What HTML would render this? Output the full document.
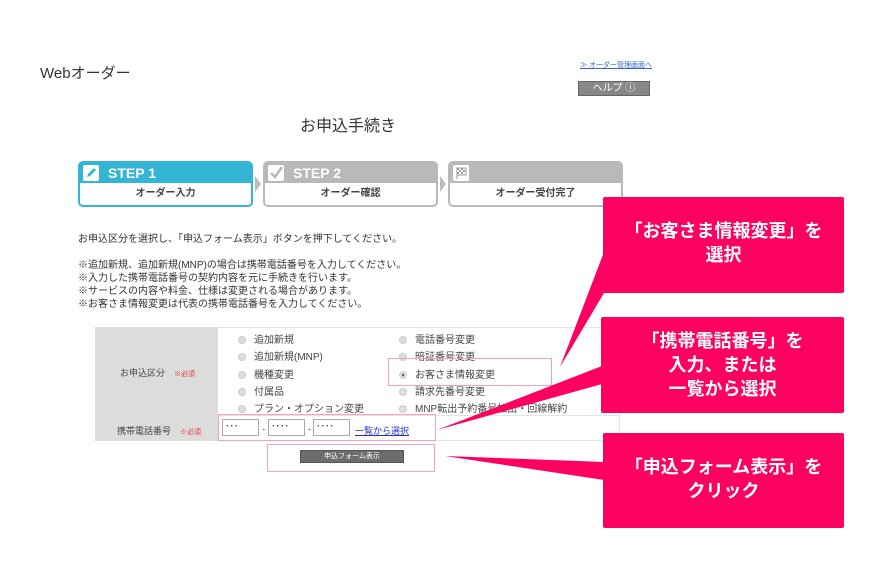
<!DOCTYPE html>
<html><head><meta charset="utf-8"><style>
*{margin:0;padding:0;box-sizing:border-box}
body{width:870px;height:566px;background:#fff;position:relative;overflow:hidden;font-family:"Liberation Sans","Noto Sans CJK JP",sans-serif;color:#333}
.a{position:absolute;white-space:nowrap}
.step{position:absolute;top:161px;height:46px;border:2px solid #b8b9bb;border-radius:5px;background:#b8b9bb}
.step .h{height:20px;color:#fff;font-weight:bold;font-size:14px;padding-left:28px;line-height:20px}
.step .b{position:absolute;left:0;right:0;bottom:0;height:22px;background:#fff;border-radius:0 0 3px 3px;text-align:center;font-size:10px;font-weight:bold;line-height:22px;color:#444}
.ic{position:absolute;left:3px;top:2px;width:16px;height:16px;background:#fff;border-radius:2px}
.r{position:absolute;font-size:10px;color:#444}
.r i{display:inline-block;width:8px;height:8px;border-radius:50%;background:#ddd;border:1px solid #ccc;margin-right:8px;vertical-align:-1px}
.pk{position:absolute;background:#fc0062;color:#fff;font-weight:bold;font-size:18px;text-align:center;line-height:24px;border-radius:2px}
.inp{position:absolute;top:419px;height:17px;border:1px solid #aaa;background:#fff;font-size:9px;padding-left:2px;line-height:12px}
</style></head><body>
<div class="a" style="left:40px;top:62px;font-size:15px;color:#333">Webオーダー</div>
<div class="a" style="left:580px;top:60px;font-size:7px;color:#36c;text-decoration:underline">≫ オーダー管理画面へ</div>
<div class="a" style="left:578px;top:81px;width:72px;height:15px;background:#888;border:1px solid #666;color:#fff;font-size:10px;text-align:center;line-height:13px">ヘルプ ⓘ</div>
<div class="a" style="left:300px;top:112px;font-size:16px;color:#333">お申込手続き</div>

<div class="step" style="left:78px;width:175px;background:#35b5d6;border-color:#35b5d6"><div class="ic"><svg width="16" height="16"><path d="M4 12 L5 9 L11 3 L13 5 L7 11 Z" fill="#35b5d6"/></svg></div><div class="h">STEP 1</div><div class="b">オーダー入力</div></div>
<div class="a" style="left:255px;top:176px;width:0;height:0;border-left:6px solid #bbb;border-top:8px solid transparent;border-bottom:8px solid transparent"></div>
<div class="step" style="left:263px;width:175px"><div class="ic"><svg width="16" height="16"><path d="M3 8 L7 12 L14 2" stroke="#b8b9bb" stroke-width="2.5" fill="none"/></svg></div><div class="h">STEP 2</div><div class="b">オーダー確認</div></div>
<div class="a" style="left:440px;top:176px;width:0;height:0;border-left:6px solid #bbb;border-top:8px solid transparent;border-bottom:8px solid transparent"></div>
<div class="step" style="left:448px;width:175px"><div class="ic"><svg width="16" height="16"><rect x="4" y="3" width="9" height="7" fill="none" stroke="#999"/><path d="M4 3h2v2H4zM8 3h2v2H8zM6 5h2v2H6zM10 5h2v2h-2zM4 7h2v2H4zM8 7h2v2H8z" fill="#999"/><path d="M4 3v11" stroke="#999"/></svg></div><div class="h"></div><div class="b">オーダー受付完了</div></div>

<div class="a" style="left:78px;top:233px;font-size:10px;line-height:13px">お申込区分を選択し、「申込フォーム表示」ボタンを押下してください。</div>
<div class="a" style="left:78px;top:259px;font-size:10px;line-height:13px">※追加新規、追加新規(MNP)の場合は携帯電話番号を入力してください。<br>※入力した携帯電話番号の契約内容を元に手続きを行います。<br>※サービスの内容や料金、仕様は変更される場合があります。<br>※お客さま情報変更は代表の携帯電話番号を入力してください。</div>

<div class="a" style="left:95px;top:327px;width:525px;height:114px;border:1px solid #e4e4e4"></div>
<div class="a" style="left:95px;top:327px;width:123px;height:114px;background:#dcdcdc"></div>
<div class="a" style="left:120px;top:366px;font-size:9px;color:#444">お申込区分　<span style="color:#e33;font-size:7px">※必須</span></div>
<div class="a" style="left:117px;top:424px;font-size:9px;color:#444">携帯電話番号　<span style="color:#e33;font-size:7px">※必須</span></div>
<div class="a" style="left:218px;top:415px;width:402px;height:1px;background:#e4e4e4"></div>

<div class="r" style="left:238px;top:331px"><i></i>追加新規</div>
<div class="r" style="left:238px;top:348px"><i></i>追加新規(MNP)</div>
<div class="r" style="left:238px;top:366px"><i></i>機種変更</div>
<div class="r" style="left:238px;top:383px"><i></i>付属品</div>
<div class="r" style="left:238px;top:400px"><i></i>プラン・オプション変更</div>
<div class="r" style="left:399px;top:331px"><i></i>電話番号変更</div>
<div class="r" style="left:399px;top:348px"><i></i>暗証番号変更</div>
<div class="r" style="left:399px;top:366px"><i style="background:radial-gradient(#666 30%,#eee 40%)"></i>お客さま情報変更</div>
<div class="r" style="left:399px;top:383px"><i></i>請求先番号変更</div>
<div class="r" style="left:399px;top:400px"><i></i>MNP転出予約番号払出・回線解約</div>

<div class="a" style="left:388px;top:358px;width:164px;height:28px;border:1px solid #f5a0c0"></div>
<div class="a" style="left:218px;top:414px;width:218px;height:27px;border:1px solid #f5a0c0"></div>
<div class="a" style="left:267px;top:444px;width:168px;height:28px;border:1px solid #f5a0c0"></div>

<div class="inp" style="left:222px;width:37px">･･･</div>
<div class="a" style="left:262px;top:424px;font-size:9px">-</div>
<div class="inp" style="left:268px;width:37px">････</div>
<div class="a" style="left:308px;top:424px;font-size:9px">-</div>
<div class="inp" style="left:313px;width:37px">････</div>
<div class="a" style="left:355px;top:424px;font-size:9px;color:#23c;text-decoration:underline">一覧から選択</div>
<div class="a" style="left:300px;top:450px;width:104px;height:13px;background:#6d6d6d;border:1px solid #555;color:#fff;font-size:7px;text-align:center;line-height:11px">申込フォーム表示</div>

<svg class="a" style="left:0;top:0" width="870" height="566"><g fill="#fc0062">
<polygon points="604,252 604,293 560,367"/>
<polygon points="602,366 602,384 437,430"/>
<polygon points="604,462 604,480 445,456"/>
</g></svg>
<div class="pk" style="left:603px;top:197px;width:241px;height:96px;padding-top:22px">「お客さま情報変更」を<br>選択</div>
<div class="pk" style="left:601px;top:317px;width:243px;height:96px;padding-top:12px">「携帯電話番号」を<br>入力、または<br>一覧から選択</div>
<div class="pk" style="left:603px;top:433px;width:241px;height:95px;padding-top:22px">「申込フォーム表示」を<br>クリック</div>
</body></html>
